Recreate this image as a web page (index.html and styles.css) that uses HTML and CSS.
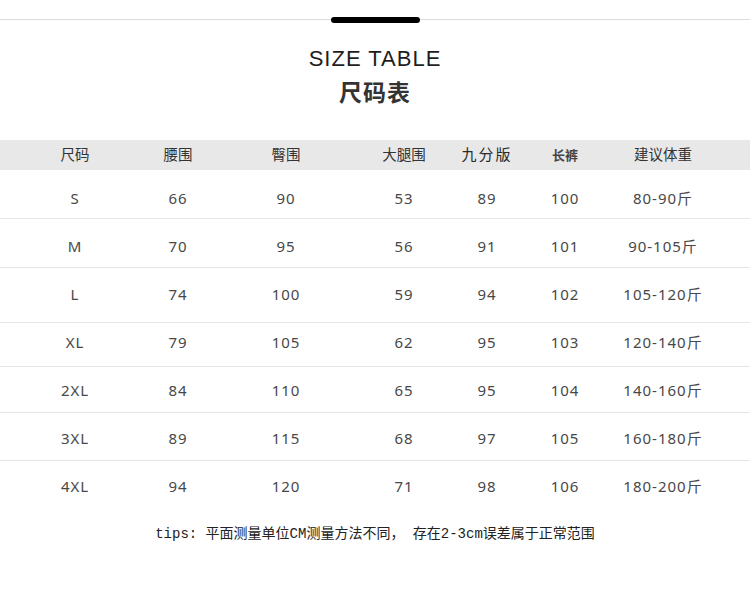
FILE: index.html
```html
<!DOCTYPE html>
<html lang="zh">
<head>
<meta charset="utf-8">
<link rel="stylesheet" href="styles.css">
</head>
<body>
<div class="page">
  <div class="topline"><span class="bar"></span></div>
  <h1 class="title-en">SIZE TABLE</h1>
  <h2 class="title-cn">尺码表</h2>
  <div class="table">
    <div class="row head">
      <div>尺码</div><div>腰围</div><div>臀围</div><div>大腿围</div><div class="h9">九分版</div><div class="hc">长裤</div><div>建议体重</div>
    </div>
    <div class="row"><div>S</div><div>66</div><div>90</div><div>53</div><div>89</div><div>100</div><div>80-90斤</div></div>
    <div class="row"><div>M</div><div>70</div><div>95</div><div>56</div><div>91</div><div>101</div><div>90-105斤</div></div>
    <div class="row"><div>L</div><div>74</div><div>100</div><div>59</div><div>94</div><div>102</div><div>105-120斤</div></div>
    <div class="row"><div>XL</div><div>79</div><div>105</div><div>62</div><div>95</div><div>103</div><div>120-140斤</div></div>
    <div class="row"><div>2XL</div><div>84</div><div>110</div><div>65</div><div>95</div><div>104</div><div>140-160斤</div></div>
    <div class="row"><div>3XL</div><div>89</div><div>115</div><div>68</div><div>97</div><div>105</div><div>160-180斤</div></div>
    <div class="row"><div>4XL</div><div>94</div><div>120</div><div>71</div><div>98</div><div>106</div><div>180-200斤</div></div>
  </div>
  <p class="tips">tips: 平面测量单位CM测量方法不同， 存在2-3cm误差属于正常范围</p>
</div>
</body>
</html>
```

FILE: styles.css
```css
* { box-sizing: border-box; }
html, body { margin: 0; padding: 0; background: #fff; }
body { font-family: "Noto Sans", "Noto Sans CJK SC", sans-serif; color: #333; }
.page { width: 750px; padding-top: 17px; }
.topline { height: 6px; display: flex; justify-content: center; align-items: center; background: linear-gradient(#fff 2px, #dcdcdc 2px, #dcdcdc 3px, #fff 3px); }
.bar { width: 89px; height: 6px; border-radius: 3px; background: #000; }
.title-en { margin: 23px 0 0; text-align: center; font-family: "Liberation Sans", Arial, sans-serif; font-weight: 400; font-size: 22px; letter-spacing: 1px; line-height: 26px; color: #1e1e1e; }
.title-cn { margin: 4px 0 0; text-align: center; font-family: "Noto Sans CJK SC", sans-serif; font-weight: 700; font-size: 23px; letter-spacing: 1px; line-height: 30px; color: #333; }
.table { margin-top: 34px; }
.row { display: grid; grid-template-columns: 150px 56px 160px 76px 90px 66px 130px; text-align: center; font-size: 15px; letter-spacing: 1px; line-height: 20px; color: #484848; border-bottom: 1px solid #e6e6e6; }
.row > div { white-space: nowrap; }
.head { height: 30px; background: #e8e8e8; border-bottom: 0; padding-top: 4px; font-family: "Noto Sans CJK SC", sans-serif; font-size: 14.5px; font-weight: 400; letter-spacing: 0; color: #333; }
.head .h9 { font-size: 15px; letter-spacing: 2px; font-weight: 400; color: #2a2a2a; }
.head .hc { font-size: 13px; font-weight: 700; color: #444; padding-top: 1px; }
.row:nth-child(2) { height: 49px; padding-top: 18px; }
.row:nth-child(3) { height: 49px; padding-top: 17px; }
.row:nth-child(4) { height: 55px; padding-top: 16px; }
.row:nth-child(5) { height: 44px; padding-top: 9px; }
.row:nth-child(6) { height: 46px; padding-top: 13px; }
.row:nth-child(7) { height: 48px; padding-top: 15px; }
.row:nth-child(8) { height: 50px; padding-top: 15px; border-bottom: 0; }
.tips { margin: 13px 0 0; text-align: center; font-family: "Liberation Mono", "Noto Sans CJK SC", monospace; font-size: 14px; line-height: 20px; color: #222; }
```
